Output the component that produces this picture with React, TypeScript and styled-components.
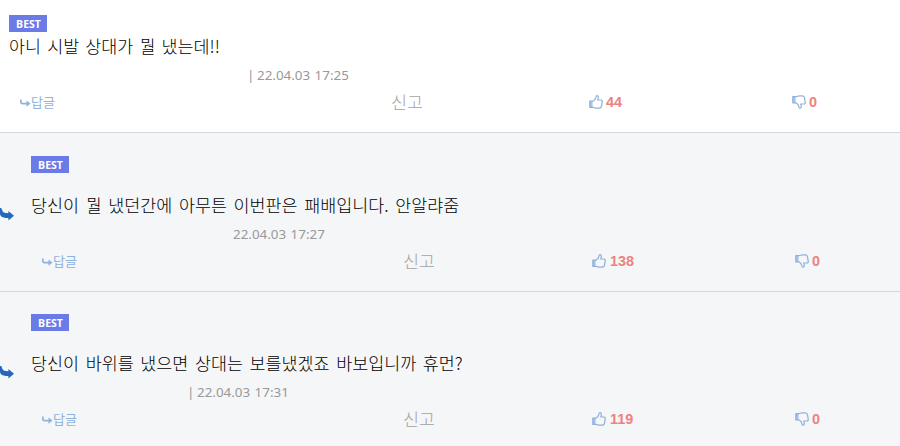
import React from "react";
import styled, { createGlobalStyle } from "styled-components";

type Comment = {
  text: string;
  date: string;
  dateX: number;
  up: number;
  down: number;
  bar?: boolean;
  reply?: boolean;
  last?: boolean;
};

const comments: Comment[] = [
  { text: "아니 시발 상대가 뭘 냈는데!!", date: "22.04.03 17:25", dateX: 238, up: 44, down: 0, bar: true },
  {
    text: "당신이 뭘 냈던간에 아무튼 이번판은 패배입니다. 안알랴줌",
    date: "22.04.03 17:27",
    dateX: 202,
    up: 138,
    down: 0,
    reply: true,
  },
  {
    text: "당신이 바위를 냈으면 상대는 보를냈겠죠 바보입니까 휴먼?",
    date: "22.04.03 17:31",
    dateX: 156,
    up: 119,
    down: 0,
    bar: true,
    reply: true,
    last: true,
  },
];

const ThumbIcon = ({ down }: { down?: boolean }) => (
  <Thumb viewBox="0 0 14 14" $down={down}>
    <path d="M1 6.2h2.6v6H1z" fill="currentColor" fillOpacity="0.75" />
    <path
      d="M.8 6.2h3C5.300 5.300 6.500 4.200 6.700 2.900C6.900 1.600 7.100.7 7.900.7C9.200.7 9.500 1.900 9.200 3.100L8.700 5H11.900C13.100 5 13.500 5.900 13.200 6.900L12.500 11.200C12.300 12.700 11.600 13.200 10.300 13.200H7.700C6.200 13.200 5.100 12.300 3.800 12.300H.8z"
      fill="none"
      stroke="currentColor"
      strokeWidth="1.2"
      strokeLinejoin="round"
    />
  </Thumb>
);

export default function App() {
  return (
    <>
      <GlobalStyle />
      <List>
        {comments.map((c) => (
          <Item key={c.date} $reply={c.reply} $last={c.last}>
            {c.reply && (
              <Gutter>
                <ReplyMark viewBox="0 0 14 13">
                  <path d="M0 0C1.300 0 1.800.5 2 1.800C2.300 4.300 4.300 5.300 8.400 5.300V2.900L14 7.700L8.400 12.500V10C3 10.100 0 8.600 0 5.500z" />
                </ReplyMark>
              </Gutter>
            )}
            <Body>
              <Best>BEST</Best>
              <Text $reply={c.reply}>{c.text}</Text>
              <DateText $x={c.dateX}>
                {c.bar && <Bar>|</Bar>}
                {c.date}
              </DateText>
              <Actions $reply={c.reply}>
                <ReplyBtn>
                  <SmallArrow viewBox="0 0 11 8">
                    <path d="M.8.5V2.800Q.8 4.600 2.600 4.600H7" />
                    <path d="M6.500 1.500L10.500 4.600L6.500 7.700z" fill="currentColor" stroke="none" />
                  </SmallArrow>
                  답글
                </ReplyBtn>
                <ReportBtn>신고</ReportBtn>
                <Vote $gap={c.reply ? 4 : 3}>
                  <ThumbIcon />
                  {c.up}
                </Vote>
                <Vote $gap={3}>
                  <ThumbIcon down />
                  {c.down}
                </Vote>
              </Actions>
            </Body>
          </Item>
        ))}
      </List>
    </>
  );
}

const GlobalStyle = createGlobalStyle`
  body {
    margin: 0;
    background: #fff;
    font-family: "Noto Sans CJK KR", sans-serif;
  }
`;

const List = styled.div`
  width: 900px;
  height: 446px;
  overflow: hidden;
`;

const Item = styled.div<{ $reply?: boolean; $last?: boolean }>`
  display: flex;
  box-sizing: border-box;
  height: ${(p) => (p.$reply ? 159 : 133)}px;
  padding-left: ${(p) => (p.$reply ? 0 : 9)}px;
  padding-top: ${(p) => (p.$last ? 22 : p.$reply ? 23 : 15)}px;
  background: ${(p) => (p.$reply ? "#f4f6f8" : "#fff")};
  border-bottom: 1px solid #d6d9dc;
`;

const Gutter = styled.div`
  flex: 0 0 31px;
  padding-top: 52px;
`;

const ReplyMark = styled.svg`
  display: block;
  width: 14px;
  height: 13px;
  fill: #2468bd;
`;

const Body = styled.div`
  flex: 1;
`;

const Best = styled.div`
  width: 38px;
  height: 17px;
  background: #6a7ae6;
  color: #fff;
  font: 700 10.5px/18px "Open Sans", sans-serif;
  text-align: center;
  text-indent: 1px;
`;

const Text = styled.div<{ $reply?: boolean }>`
  margin-top: ${(p) => (p.$reply ? 19 : 1)}px;
  height: 26px;
  line-height: 25px;
  font-size: 17.4px;
  font-weight: 300;
  word-spacing: ${(p) => (p.$reply ? 2.8 : 2.3)}px;
  white-space: nowrap;
  color: #000;
`;

const DateText = styled.div<{ $x: number }>`
  display: flex;
  margin-left: ${(p) => p.$x}px;
  margin-top: 6px;
  height: 20px;
  color: #999;
  font: 13.4px/20px "Noto Sans", sans-serif;
  word-spacing: 1px;
`;

const Bar = styled.span`
  width: 10px;
`;

const Actions = styled.div<{ $reply?: boolean }>`
  display: grid;
  grid-template-columns: ${(p) => (p.$reply ? "372px 189px 203px 1fr" : "382px 198px 203px 1fr")};
  align-items: center;
  height: 24px;
  margin-top: 5px;
`;

const ReplyBtn = styled.div`
  display: flex;
  align-items: center;
  padding-left: 11px;
  color: #8fb2de;
  font-size: 13px;
  line-height: 24px;
`;

const SmallArrow = styled.svg`
  width: 11px;
  height: 8px;
  margin: 2px 0 0 0;
  fill: none;
  stroke: currentColor;
  stroke-width: 1.7;
`;

const ReportBtn = styled.div`
  color: #a3a3a3;
  font-size: 17.4px;
  font-weight: 300;
  line-height: 24px;
`;

const Vote = styled.div<{ $gap: number }>`
  display: flex;
  align-items: center;
  gap: ${(p) => p.$gap}px;
  color: #ee8181;
  font: 700 14.4px/24px "Liberation Sans", Arial, sans-serif;
`;

const Thumb = styled.svg<{ $down?: boolean }>`
  width: 14px;
  height: 14px;
  color: #8eb0dd;
  transform: ${(p) => (p.$down ? "scaleY(-1)" : "none")};
`;
